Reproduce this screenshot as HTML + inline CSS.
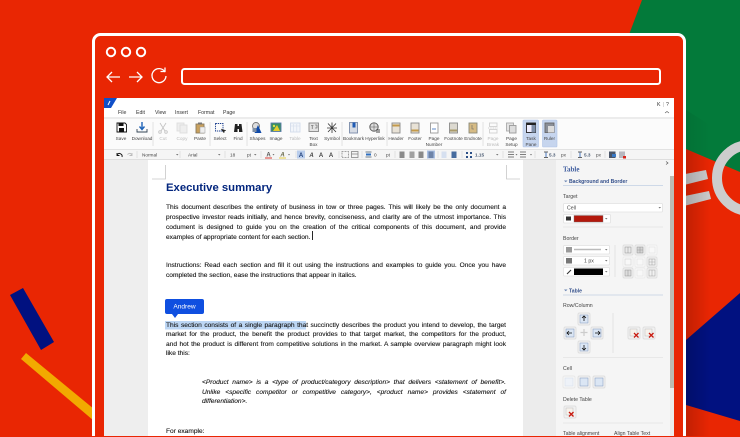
<!DOCTYPE html>
<html><head><meta charset="utf-8">
<style>
html,body{margin:0;padding:0}
body{width:740px;height:436px;overflow:hidden;position:relative;background:#e92603;font-family:"Liberation Sans",sans-serif}
svg{position:absolute;left:0;top:0}
svg text{font-family:"Liberation Sans",sans-serif}
.l{position:absolute;left:166px;width:340px;font-size:6.6px;line-height:10px;height:10px;color:#111;-webkit-text-stroke:.12px #222;text-align:justify;text-align-last:justify;white-space:nowrap}
.s{text-align-last:left}
.i{left:202px;width:304px;font-style:italic}
</style></head><body>
<svg width="740" height="436" viewBox="0 0 740 436">
<defs><linearGradient id="sh" x1="0" x2="1" y1="0" y2="0"><stop offset="0" stop-color="#000" stop-opacity=".17"/><stop offset="1" stop-color="#000" stop-opacity="0"/></linearGradient>
<linearGradient id="sg" x1="0" x2="1" y1="0" y2="0"><stop offset="0" stop-color="#000" stop-opacity=".07"/><stop offset="1" stop-color="#000" stop-opacity="0"/></linearGradient></defs>
<!-- background shapes -->
<polygon points="642,0 740,0 740,172 686,149 600,112" fill="#037a3a"/>
<polygon points="686,340 740,293 740,421 686,405" fill="#011180"/>
<circle cx="750" cy="178" r="33" fill="none" stroke="#cdcdcd" stroke-width="10"/>
<polygon points="680,175 706,170 708,179 680,186" fill="#cbcbcb"/>
<polygon points="680,197 709,191 711,199 680,207" fill="#cbcbcb"/>
<polygon points="10,295 23,288 54,342 41,350" fill="#011180"/>
<polygon points="26,353 21,359 100,426 100,414" fill="#f2aa00"/>
<polygon points="686,149 710,159 710,436 686,436" fill="url(#sh)"/>
<polygon points="686,110 710,125 710,159 686,149" fill="url(#sg)"/>
<!-- window -->
<rect x="93.5" y="34.500" width="591" height="420" rx="7" fill="#e92603" stroke="#fff" stroke-width="3"/>
<g fill="none" stroke="#fff" stroke-width="2">
<circle cx="111" cy="52" r="4.200"/><circle cx="126" cy="52" r="4.200"/><circle cx="141" cy="52" r="4.200"/>
<rect x="182" y="69" width="478" height="15" rx="2.500"/>
</g>
<g fill="none" stroke="#fff" stroke-width="1.300">
<path d="M120 77H107M112 72l-5 5 5 5"/>
<path d="M129 77h13M137 72l5 5-5 5"/>
<path d="M165 72a7 7 0 1 0 1 4"/><path d="M160.500 71.500h4.500v-4"/>
</g>
<!-- app -->
<rect x="104" y="98" width="570" height="338" fill="#fff"/>
<polygon points="104,98 117,98 111,108 104,108" fill="#0f4fc8"/>
<path d="M108 105l2-4" stroke="#fff" stroke-width="1"/>
<rect x="104" y="117" width="570" height="2" fill="#ececec"/>
<rect x="104" y="119" width="570" height="30" fill="#fbfbfb"/>
<rect x="104" y="149" width="570" height="1" fill="#e2e2e2"/>
<rect x="104" y="150" width="570" height="9" fill="#f5f5f5"/>
<rect x="104" y="159" width="570" height="1" fill="#dedede"/>
<rect x="104" y="160" width="44" height="276" fill="#eeeeee"/>
<rect x="523" y="160" width="33" height="276" fill="#ececec"/>
<rect x="556" y="160" width="118" height="276" fill="#f5f5f5"/>
<rect x="670" y="176" width="4" height="212" fill="#bcbcb2"/>
<rect x="670" y="388" width="4" height="48" fill="#ececec"/>
<!-- crop marks -->
<path d="M165.500 165v14H152M506.500 165v14H520" fill="none" stroke="#c8c8c8" stroke-width=".8"/>
<!-- menu -->
<g font-size="5.200" fill="#333">
<text x="118" y="114">File</text><text x="136" y="114">Edit</text><text x="155" y="114">View</text><text x="175" y="114">Insert</text><text x="198" y="114">Format</text><text x="223" y="114">Page</text>
<text x="657" y="106">K</text><text x="663" y="106" fill="#aaa">|</text><text x="666" y="106">?</text>
</g>
<path d="M665 113l2-1.500 2 1.500" fill="none" stroke="#555" stroke-width=".6"/>
<!-- toolbar separators -->
<g stroke="#dddddd" stroke-width=".8">
<path d="M153 122v24M210 122v24M247 122v24M342 122v24M387 122v24M483 122v24"/>
<path d="M137 151v7M180 151v7M225 151v7M261 151v7M296 151v7M339 151v7M362 151v7M395 151v7M438 151v7M462 151v7M503 151v7M535 151v7M571 151v7M605 151v7"/>
</g>
<!-- highlights -->
<rect x="523" y="120" width="15.500" height="27" rx="1" fill="#c6d5ee" stroke="#b0c4e6" stroke-width=".6"/>
<rect x="542.500" y="120" width="14.500" height="27" rx="1" fill="#c6d5ee" stroke="#b0c4e6" stroke-width=".6"/>
<rect x="297" y="150.500" width="8" height="8" fill="#b9cdec"/>
<rect x="427" y="150.500" width="8" height="8" fill="#a9bfe3"/>
<!-- toolbar labels -->
<g font-size="4.700" fill="#444" text-anchor="middle">
<text x="121" y="140">Save</text><text x="142" y="140">Download</text><text x="163" y="140" fill="#bbb">Cut</text><text x="182" y="140" fill="#bbb">Copy</text><text x="200" y="140">Paste</text><text x="220" y="140">Select</text><text x="238" y="140">Find</text><text x="257.500" y="140">Shapes</text><text x="276" y="140">Image</text><text x="295" y="140" fill="#bbb">Table</text><text x="313.500" y="140">Text</text><text x="313.500" y="146">Box</text><text x="332" y="140">Symbol</text><text x="353.500" y="140">Bookmark</text><text x="375" y="140">Hyperlink</text><text x="396" y="140">Header</text><text x="415" y="140">Footer</text><text x="434" y="140">Page</text><text x="434" y="146">Number</text><text x="453.500" y="140">Footnote</text><text x="473" y="140">Endnote</text><text x="493" y="140" fill="#bbb">Page</text><text x="493" y="146" fill="#bbb">Break</text><text x="511.500" y="140">Page</text><text x="511.500" y="146">Setup</text><text x="531" y="140">Task</text><text x="531" y="146">Pane</text><text x="549.500" y="140">Ruler</text>
</g>
<!-- toolbar icons -->
<g stroke-width=".9" fill="none">
<path d="M117 123h8l1.500 1.500V132h-9.500z" stroke="#111"/><rect x="118.500" y="123" width="5" height="3" fill="#111"/><rect x="119" y="128" width="5" height="4" fill="#111"/>
<path d="M137 129v3h10v-3" stroke="#345"/><path d="M142 122v7M139.500 126.500l2.500 3 2.500-3" stroke="#1e63b8" stroke-width="1.400"/>
<path d="M160 123l5 8M166 123l-5 8" stroke="#c4c4c4"/><circle cx="160" cy="132" r="1.300" stroke="#c4c4c4"/><circle cx="166" cy="132" r="1.300" stroke="#c4c4c4"/>
<rect x="177" y="123" width="7" height="8" fill="#eee" stroke="#ddd"/><rect x="180" y="125" width="7" height="8" fill="#eee" stroke="#ddd"/>
<rect x="196" y="124" width="8" height="9" fill="#c9a15e" stroke="#8a7a5e"/><rect x="198" y="122.500" width="4" height="2" fill="#777"/><rect x="200" y="127" width="5" height="6" fill="#eee" stroke="#999" stroke-width=".5"/>
<rect x="215.500" y="123.500" width="7.500" height="7.500" stroke="#1b3f8f" stroke-dasharray="1.400 .8"/><path d="M221 129l3 4 .5-2 1.500-.5z" fill="#222" stroke="#222" stroke-width=".3"/>
<path d="M235 124h2.500v8H234zM239 124h2.500l1 8H239z" fill="#222" stroke="none"/><rect x="237" y="126" width="2.500" height="3" fill="#222"/>
<circle cx="256" cy="126" r="3.500" stroke="#777" fill="#ddd"/><polygon points="258,125 261.500,133 254.500,133" fill="#0e49a8"/><rect x="252.500" y="128" width="4" height="4" fill="#7d8ea5"/>
<rect x="271" y="123" width="10" height="8.500" fill="#3a8f62" stroke="#5a7aa8"/><polygon points="273,131 277,125 280,131" fill="#e6cd2a"/><circle cx="274" cy="126" r="1.200" fill="#dde34a"/>
<rect x="290.500" y="123" width="9.500" height="9" fill="#f2f5fa" stroke="#d3dcea"/><path d="M290.500 126h9.500M293.500 124v8M296.800 124v8" stroke="#d3dcea" stroke-width=".6"/>
<rect x="309" y="123" width="9.500" height="8.500" fill="#e3e3e3" stroke="#888"/><path d="M311 125.500h2.500M312.200 125.500v3.500M315 125h2v3h-2" stroke="#555" stroke-width=".6"/>
<path d="M328 123.500l8 8.500M336 123.500l-8 8.500M332 122.500v10.500M327 128h10" stroke="#333" stroke-width=".8"/>
<rect x="349.500" y="122.500" width="8" height="10.500" fill="#d6dbe4" stroke="#7a8aa8"/><rect x="352.500" y="122.500" width="3" height="5" fill="#1f5bb5"/>
<circle cx="374" cy="127" r="4.200" fill="#ddd" stroke="#555"/><path d="M370 127h8M374 123v8" stroke="#555" stroke-width=".5"/><path d="M376 130h4M376 132h4" stroke="#444" stroke-width=".9"/>
<g fill="#e8e2d6" stroke="#8a8a8a"><rect x="392" y="123" width="8" height="10"/><rect x="411" y="123" width="8" height="10"/></g>
<rect x="392.500" y="124.500" width="7" height="2" fill="#c49a4a"/><rect x="411.500" y="129.500" width="7" height="2" fill="#c49a4a"/>
<rect x="430.500" y="123" width="7.500" height="10" fill="#fff" stroke="#9a9a9a"/><path d="M432 129h4" stroke="#4a7cc4"/>
<rect x="449.500" y="123" width="8" height="10" fill="#dcd9d0" stroke="#8a8a8a"/><rect x="450" y="129.500" width="7" height="2" fill="#a99a6a"/>
<rect x="469" y="123" width="8" height="10" fill="#d6bb84" stroke="#8a8a7a"/><path d="M472 125v4h2" stroke="#666" stroke-width=".6"/>
<g stroke="#d0d0d0"><rect x="489.500" y="123" width="7.500" height="3.500"/><rect x="489.500" y="129.500" width="7.500" height="3.500"/><path d="M488 128h10" stroke-dasharray="1 .7"/></g>
<rect x="506.500" y="123" width="7" height="8" fill="#e4e4e4" stroke="#aaa"/><rect x="509.500" y="125.500" width="6.500" height="7.500" fill="#ddd" stroke="#999"/>
<rect x="526.500" y="123" width="9" height="9.500" fill="#eef" stroke="#222"/><rect x="526.500" y="123" width="9" height="2" fill="#222"/><rect x="531.500" y="125" width="4" height="7.500" fill="#7f8fa8"/>
<rect x="545" y="123" width="9" height="9.500" fill="#8a8f98" stroke="#666"/><rect x="548" y="126" width="6" height="6.500" fill="#dcdcdc"/>
</g>
<!-- second toolbar -->
<g font-size="4.700" fill="#444">
<text x="142" y="156.500">Normal</text><text x="188" y="156.500">Arial</text><text x="230" y="156.500">18</text><text x="247" y="156.500">pt</text><text x="374" y="156.500">0</text><text x="386" y="156.500">pt</text><text x="475" y="156.500" font-weight="bold" fill="#4a5a72">1.15</text><text x="549" y="156.500" font-weight="bold" fill="#4a5a72">5.3</text><text x="561" y="156.500">px</text><text x="584" y="156.500" font-weight="bold" fill="#4a5a72">5.3</text><text x="596" y="156.500">px</text>
</g>
<g font-size="6" font-weight="bold" fill="#444" text-anchor="middle">
<text x="301" y="157" fill="#1d3d78">A</text><text x="311.500" y="157" font-style="italic">A</text><text x="321" y="157">A</text><text x="331" y="157">A</text><text x="268.500" y="156.500" fill="#555">A</text><text x="282.500" y="156.500" font-style="italic" fill="#6a6a4a">A</text>
</g>
<g fill="#777"><path d="M176 154h2.500l-1.250 1.500zM218 154h2.500l-1.250 1.500zM254 154h2.500l-1.250 1.500zM272.500 154h2l-1 1.500zM288 154h2l-1 1.500zM496 154h2.500l-1.250 1.500zM515.500 154h2l-1 1.500zM530 154h2l-1 1.500z"/></g>
<path d="M265 158h7" stroke="#d8261c" stroke-width=".9"/><path d="M279 158h7" stroke="#e4c82a" stroke-width=".9"/>
<path d="M117 155q2-3 4.500-.5q1 1 .5 2.500M117 153v2.500h2.500" fill="none" stroke="#111" stroke-width=".9"/>
<path d="M132 155q-2-3-4.500-.5M132 153v2.500h-2.500" fill="none" stroke="#bbb" stroke-width=".9"/>
<g fill="none" stroke-width=".8">
<rect x="342" y="151.500" width="6.500" height="6" stroke="#888" stroke-dasharray="1 .5"/><rect x="351.500" y="151.500" width="6.500" height="6" stroke="#888"/><path d="M351.500 154h6.500" stroke="#888"/>
<path d="M365.500 152h6M365.500 157h6" stroke="#456"/><rect x="366" y="153.500" width="5" height="2" fill="#2f6fc0" stroke="none"/>
</g>
<g stroke="#8a8a8a" stroke-width="5" fill="none"><path d="M402 151.500v6.500"/><path d="M412 151.500v6.500" stroke="#a0a0a0"/><path d="M421 151.500v6.500"/><path d="M431 151.500v6.500" stroke="#6d83a8"/></g>
<g stroke-width="5"><path d="M444 151.500v6.500" stroke="#d6e0f0"/><path d="M454 151.500v6.500" stroke="#466c9f"/></g>
<path d="M466 152h2v2h-2zM470 152h2v2h-2zM466 156h2v2h-2zM470 156h2v2h-2z" fill="#2b4f87"/>
<path d="M508 152h6M508 154.500h6M508 157h6M520 152h6M520 154.500h6M520 157h6" stroke="#555" stroke-width=".7"/>
<path d="M544 152h4M544 157.500h4M578 152h4M578 157.500h4" stroke="#333" stroke-width=".8"/><path d="M546 152.500v4.500M580 152.500v4.500" stroke="#4a7cc4" stroke-width="1"/>
<rect x="609" y="151.500" width="6.500" height="6.500" fill="#4a5568"/><rect x="612" y="154" width="4" height="3" fill="#3a78c4"/>
<rect x="619" y="151.500" width="6" height="6.500" fill="#b8b8c0"/><rect x="623" y="156" width="3" height="2.500" fill="#d8261c"/>
<!-- right panel -->
<text x="563" y="171.500" font-size="7" font-weight="bold" fill="#3e5c9e" style="font-family:'Liberation Serif',serif">Table</text>
<path d="M666 161.500l2 1.500-2 1.500" fill="none" stroke="#555" stroke-width=".7"/>
<g font-size="5.100" font-weight="bold" fill="#34508c"><text x="569" y="183">Background and Border</text><text x="569" y="292.500">Table</text></g>
<path d="M564 180.500h3.500l-1.750 1.700zM564 289.500h3.500l-1.750 1.700z" fill="#6c86b4"/>
<path d="M563 185.500h100M563 295h100" stroke="#ced9e8"/>
<g fill="#fff" stroke="#e1e1e1" stroke-width=".8">
<rect x="563.500" y="203.500" width="99" height="8.500" rx="1"/>
<rect x="563.500" y="214.500" width="47" height="8.500" rx="1"/>
<rect x="563.500" y="245.500" width="46" height="8.500" rx="1"/>
<rect x="563.500" y="256.500" width="46" height="8.500" rx="1"/>
<rect x="563.500" y="267.500" width="46" height="8.500" rx="1"/>
</g>
<g font-size="5.200" fill="#444">
<text x="563" y="198">Target</text><text x="567" y="209.500">Cell</text><text x="563" y="240">Border</text><text x="584" y="262.500">1 px</text><text x="563" y="307">Row/Column</text><text x="563" y="370">Cell</text><text x="563" y="401">Delete Table</text><text x="563" y="435">Table alignment</text><text x="614" y="435">Align Table Text</text>
</g>
<path d="M658.500 207h2.500l-1.250 1.500zM605 218h2.500l-1.250 1.500zM605 249h2.500l-1.250 1.500zM605 260h2.500l-1.250 1.500zM605 271h2.500l-1.250 1.500z" fill="#777"/>
<rect x="574" y="215.500" width="29" height="6.500" fill="#b3180c" stroke="#777" stroke-width=".4"/>
<rect x="574" y="268.500" width="29" height="6.500" fill="#000"/>
<rect x="566" y="216.500" width="5" height="4" fill="#333"/><rect x="566" y="247" width="6" height="5.500" fill="#9a9a9a"/><rect x="566" y="258" width="6" height="5.500" fill="#777"/>
<path d="M567 274l4-4" stroke="#333" stroke-width="1.100"/>
<path d="M574 249.500h27" stroke="#bbb" stroke-width="1.500"/>
<path d="M563 227h100M563 357.500h100M563 423h100" stroke="#e8e8e8"/>
<path d="M615 245v32M613 313v40" stroke="#e2e2e2"/>
<g fill="#f1f1f1" stroke="#dedede" stroke-width=".9">
<rect x="623" y="245" width="10" height="10" rx="1.500"/><rect x="635" y="245" width="10" height="10" rx="1.500"/><rect x="647" y="245" width="10" height="10" rx="1.500" fill="#f8f8f8" stroke="#ececec"/>
<rect x="623" y="257" width="10" height="10" rx="1.500" fill="#f8f8f8" stroke="#ececec"/><rect x="635" y="257" width="10" height="10" rx="1.500" fill="#f8f8f8" stroke="#ececec"/><rect x="647" y="257" width="10" height="10" rx="1.500"/>
<rect x="623" y="268" width="10" height="10" rx="1.500"/><rect x="635" y="268" width="10" height="10" rx="1.500" fill="#f8f8f8" stroke="#ececec"/><rect x="647" y="268" width="10" height="10" rx="1.500"/>
<rect x="578" y="313" width="12" height="12" rx="1.500"/><rect x="564" y="327" width="12" height="12" rx="1.500"/><rect x="591" y="327" width="12" height="12" rx="1.500"/><rect x="578" y="341" width="12" height="12" rx="1.500"/>
<rect x="628" y="327" width="12" height="12" rx="1.500"/><rect x="643" y="327" width="12" height="12" rx="1.500"/>
<rect x="563" y="376" width="12" height="12" rx="1.500" fill="#f6f6f6" stroke="#e8e8e8"/><rect x="578" y="376" width="12" height="12" rx="1.500"/><rect x="593" y="376" width="12" height="12" rx="1.500"/>
<rect x="564" y="406" width="12" height="12" rx="1.500"/>
</g>
<g fill="#e9e9e9" stroke="#9c9c9c" stroke-width=".6">
<rect x="625" y="247" width="6" height="6"/><path d="M628 247v6" fill="none"/><rect x="637" y="247" width="6" height="6" fill="#d4d4d4"/><path d="M640 247v6M637 250h6" fill="none"/><rect x="649" y="247" width="6" height="6" fill="none" stroke="#e2e2e2"/>
<rect x="625" y="259" width="6" height="6" fill="none" stroke="#d0d0d0"/><rect x="637" y="259" width="6" height="6" fill="none" stroke="#e2e2e2"/><rect x="649" y="259" width="6" height="6" fill="none" stroke="#aaa"/><path d="M652 259v6M649 262h6" fill="none" stroke="#aaa"/>
<rect x="625" y="270" width="6" height="6" fill="#ddd"/><path d="M628 270v6" fill="none"/><rect x="637" y="270" width="6" height="6" fill="none" stroke="#e2e2e2"/><rect x="649" y="270" width="6" height="6" fill="none" stroke="#aaa"/><path d="M652 270v6" fill="none" stroke="#aaa"/>
</g>
<g fill="#dbe6f4" stroke="#7e97bd" stroke-width=".5">
<rect x="580" y="315" width="8" height="8"/><rect x="566" y="329" width="8" height="8"/><rect x="593" y="329" width="8" height="8"/><rect x="580" y="343" width="8" height="8"/>
<rect x="565" y="378" width="8" height="8" fill="#eef2f8" stroke="#d2dcea"/><rect x="580" y="378" width="8" height="8"/><rect x="595" y="378" width="8" height="8"/>
<rect x="630" y="329" width="7" height="7" fill="#f6f2ec" stroke="#bbb"/><rect x="645" y="329" width="7" height="7" fill="#f6f2ec" stroke="#bbb"/><rect x="566" y="408" width="7" height="7" fill="#f6f2ec" stroke="#bbb"/>
</g>
<path d="M584 316v5M582 318l2-2 2 2M584 350v-5M582 348l2 2 2-2M567 333h5M569 331l-2 2 2 2M600 333h-5M598 331l2 2-2 2" fill="none" stroke="#111" stroke-width=".8"/>
<path d="M584 329v7M580.500 332.500h7" stroke="#ccc" stroke-width="1.200"/>
<path d="M634 333l4.500 4.500M638.500 333l-4.500 4.500M649 333l4.500 4.500M653.500 333l-4.500 4.500M569 412l4.500 4.500M573.500 412l-4.500 4.500" stroke="#c8190f" stroke-width="1.300"/>
<!-- comment tag -->
<path d="M167 299h35a2 2 0 0 1 2 2v11a2 2 0 0 1-2 2h-24l-3 4-3-4h-5a2 2 0 0 1-2-2v-11a2 2 0 0 1 2-2z" fill="#0f4fe0"/>
<text x="184.500" y="308.300" font-size="6.600" fill="#fff" text-anchor="middle">Andrew</text>
<rect x="165" y="321" width="141" height="8.500" fill="#bcd6f4"/>
<rect x="312" y="231" width=".9" height="9" fill="#111"/>
</svg>
<div style="position:absolute;left:166px;top:181px;font-size:11.300px;line-height:15px;font-weight:bold;color:#03267e;white-space:nowrap">Executive summary</div>
<div class="l" style="top:203px">This document describes the entirety of business in tow or three pages. This will likely be the only document a</div>
<div class="l" style="top:213px">prospective investor reads initially, and hence brevity, conciseness, and clarity are of the utmost importance. This</div>
<div class="l" style="top:223px">codument is designed to guide you on the creation of the critical components of this document, and provide</div>
<div class="l s" style="top:232.500px">examples of appropriate content for each section.</div>
<div class="l" style="top:260.500px">Instructions: Read each section and fill it out using the instructions and examples to guide you. Once you have</div>
<div class="l s" style="top:270.500px">completed the section, ease the instructions that appear in italics.</div>
<div class="l" style="top:320.500px">This section consists of a single paragraph that succinctly describes the product you intend to develop, the target</div>
<div class="l" style="top:330px">market for the product, the benefit the product provides to that target market, the competitors for the product,</div>
<div class="l" style="top:339.500px">and hot the product is different from competitive solutions in the market. A sample overview paragraph might look</div>
<div class="l s" style="top:349px">like this:</div>
<div class="l i" style="top:378px">&lt;Product name&gt; is a &lt;type of product/category description&gt; that delivers &lt;statement of benefit&gt;.</div>
<div class="l i" style="top:387.500px">Unlike &lt;specific competitor or competitive category&gt;, &lt;product name&gt; provides &lt;statement of</div>
<div class="l i s" style="top:397px">differentiation&gt;.</div>
<div class="l s" style="top:427px">For example:</div>
</body></html>
